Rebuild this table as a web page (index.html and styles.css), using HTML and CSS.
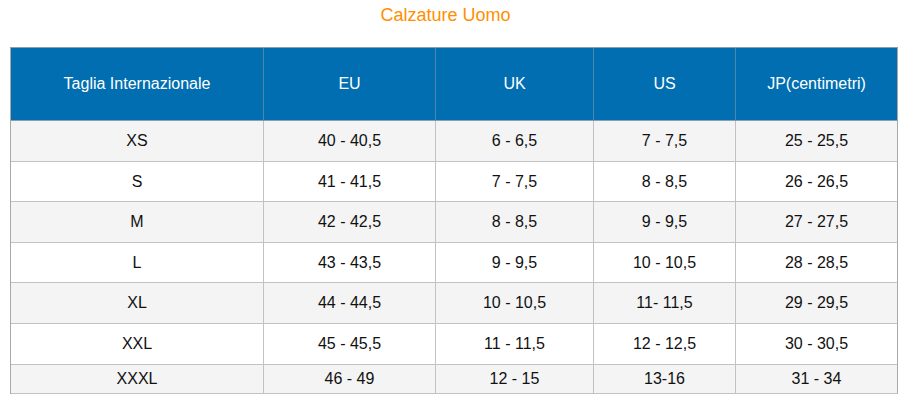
FILE: index.html
```html
<!DOCTYPE html>
<html lang="it">
<head>
<meta charset="utf-8">
<title>Calzature Uomo</title>
<link rel="stylesheet" href="styles.css">
</head>
<body>
<h2 class="title">Calzature Uomo</h2>
<div class="size-table">
  <div class="cell head">Taglia Internazionale</div>
  <div class="cell head">EU</div>
  <div class="cell head">UK</div>
  <div class="cell head">US</div>
  <div class="cell head">JP(centimetri)</div>

  <div class="cell odd">XS</div><div class="cell odd">40 - 40,5</div><div class="cell odd">6 - 6,5</div><div class="cell odd">7 - 7,5</div><div class="cell odd">25 - 25,5</div>
  <div class="cell">S</div><div class="cell">41 - 41,5</div><div class="cell">7 - 7,5</div><div class="cell">8 - 8,5</div><div class="cell">26 - 26,5</div>
  <div class="cell odd">M</div><div class="cell odd">42 - 42,5</div><div class="cell odd">8 - 8,5</div><div class="cell odd">9 - 9,5</div><div class="cell odd">27 - 27,5</div>
  <div class="cell">L</div><div class="cell">43 - 43,5</div><div class="cell">9 - 9,5</div><div class="cell">10 - 10,5</div><div class="cell">28 - 28,5</div>
  <div class="cell odd">XL</div><div class="cell odd">44 - 44,5</div><div class="cell odd">10 - 10,5</div><div class="cell odd">11- 11,5</div><div class="cell odd">29 - 29,5</div>
  <div class="cell">XXL</div><div class="cell">45 - 45,5</div><div class="cell">11 - 11,5</div><div class="cell">12 - 12,5</div><div class="cell">30 - 30,5</div>
  <div class="cell odd">XXXL</div><div class="cell odd">46 - 49</div><div class="cell odd">12 - 15</div><div class="cell odd">13-16</div><div class="cell odd">31 - 34</div>
</div>
</body>
</html>
```
FILE: styles.css
```css
html, body {
  margin: 0;
  padding: 0;
  background: #ffffff;
  font-family: "Liberation Sans", Arial, sans-serif;
}

body {
  padding: 5px 10px 0 10px;
  width: 888px;
}

.title {
  margin: 0 17px 0 0;
  font-size: 18px;
  line-height: 20px;
  height: 42px;
  font-weight: normal;
  color: #ff8f00;
  text-align: center;
}

.size-table {
  display: grid;
  grid-template-columns: 253px 172px 158px 142px 162px;
  grid-template-rows: 73px 41px 40px 41px 40px 41px 41px 29px;
  border-top: 1px solid #8a9fae;
  border-left: 1px solid #a8a8a8;
}

.cell {
  display: flex;
  align-items: center;
  justify-content: center;
  border-right: 1px solid #c2c2c2;
  border-bottom: 1px solid #c2c2c2;
  font-size: 16px;
  color: #111111;
  background: #ffffff;
}

.cell.odd {
  background: #f4f4f4;
}

.cell.head {
  background: #006eb0;
  color: #ffffff;
  border-right-color: #4f87aa;
  border-bottom-color: #8a9fae;
}

.cell.head:last-child,
.cell:nth-child(5n) {
  border-right-color: #a8a8a8;
}
```
